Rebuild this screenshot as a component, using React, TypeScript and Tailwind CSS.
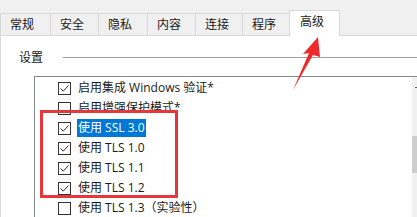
const tabs = [
  { label: "常规", w: "w-[50px]" },
  { label: "安全", w: "w-[48px]" },
  { label: "隐私", w: "w-[49px]" },
  { label: "内容", w: "w-[48px]" },
  { label: "连接", w: "w-[47px]" },
  { label: "程序", w: "w-[47px]" },
];

const rows = [
  { checked: true, text: "启用集成 Windows 验证*" },
  { checked: false, text: "启用增强保护模式*" },
  { checked: true, text: "使用 SSL 3.0", selected: true },
  { checked: true, text: "使用 TLS 1.0" },
  { checked: true, text: "使用 TLS 1.1" },
  { checked: true, text: "使用 TLS 1.2" },
  { checked: false, text: "使用 TLS 1.3（实验性）" },
];

function Checkbox({ checked }: { checked: boolean }) {
  return (
    <div className="w-[13px] h-[13px] border border-[#333333] bg-white flex items-center justify-center shrink-0">
      {checked && (
        <svg width="11" height="11" viewBox="0 0 11 11">
          <path d="M1.5 5.5 L4.2 8.2 L9.5 2.5" fill="none" stroke="#333" strokeWidth="1" />
        </svg>
      )}
    </div>
  );
}

export default function App() {
  return (
    <div
      className="relative w-[417px] h-[217px] overflow-hidden bg-white text-[12px] text-[#1a1a1a]"
      style={{ fontFamily: '"Segoe UI", "Open Sans", "Noto Sans CJK SC", sans-serif' }}
    >
      {/* tab strip */}
      <div className="flex items-end h-[36px] bg-[#f0f0f0] border-b border-[#d9d9d9]">
        {tabs.map((t) => (
          <div
            key={t.label}
            className={`${t.w} h-[23px] -mb-px border-t border-l border-b border-[#d9d9d9] bg-[#f0f0f0] pl-[9px] flex items-center`}
          >
            {t.label}
          </div>
        ))}
        <div className="w-[51px] h-[26px] -mb-px border-t border-l border-r border-[#d9d9d9] bg-white pl-[10px] pt-[3px] leading-[16px]">
          高级
        </div>
      </div>

      {/* panel */}
      <div className="border-l border-[#d9d9d9] h-[181px]">
        <div className="flex items-center h-[40px] pl-[18px] pt-[3px]">
          <span>设置</span>
          <div className="flex-1 ml-[20px] h-px bg-[#a0a0a0]" />
        </div>

        <div className="ml-[33px] border-t border-l border-[#828790] flex h-[150px]">
          <div className="flex-1 pt-[1px]">
            {rows.map((r) => (
              <div key={r.text} className="h-[20px] flex items-center pl-[23px] whitespace-nowrap">
                <Checkbox checked={r.checked} />
                <span
                  className={
                    r.selected
                      ? "ml-[6px] px-[1px] h-[18px] leading-[18px] bg-[#0078d7] text-white"
                      : "ml-[7px]"
                  }
                >
                  {r.text}
                </span>
              </div>
            ))}
          </div>
          <div className="w-[5px] bg-[#f0f0f0] flex flex-col pt-[10px]">
            <div className="h-px w-[2px] ml-[3px] bg-[#606060]" />
            <div className="mt-[48px] h-[37px] bg-[#cdcdcd]" />
          </div>
        </div>
      </div>

      {/* annotation: red box */}
      <div className="absolute left-[40px] top-[110px] w-[138px] h-[88px] border-[3px] border-[#e5383b]" />

      {/* annotation: red arrow */}
      <svg className="absolute left-0 top-0" width="417" height="217" viewBox="0 0 417 217">
        <polygon points="318,37 303,54 309,53 293,90 313,55 320,57" fill="#ee2a2a" />
      </svg>
    </div>
  );
}
